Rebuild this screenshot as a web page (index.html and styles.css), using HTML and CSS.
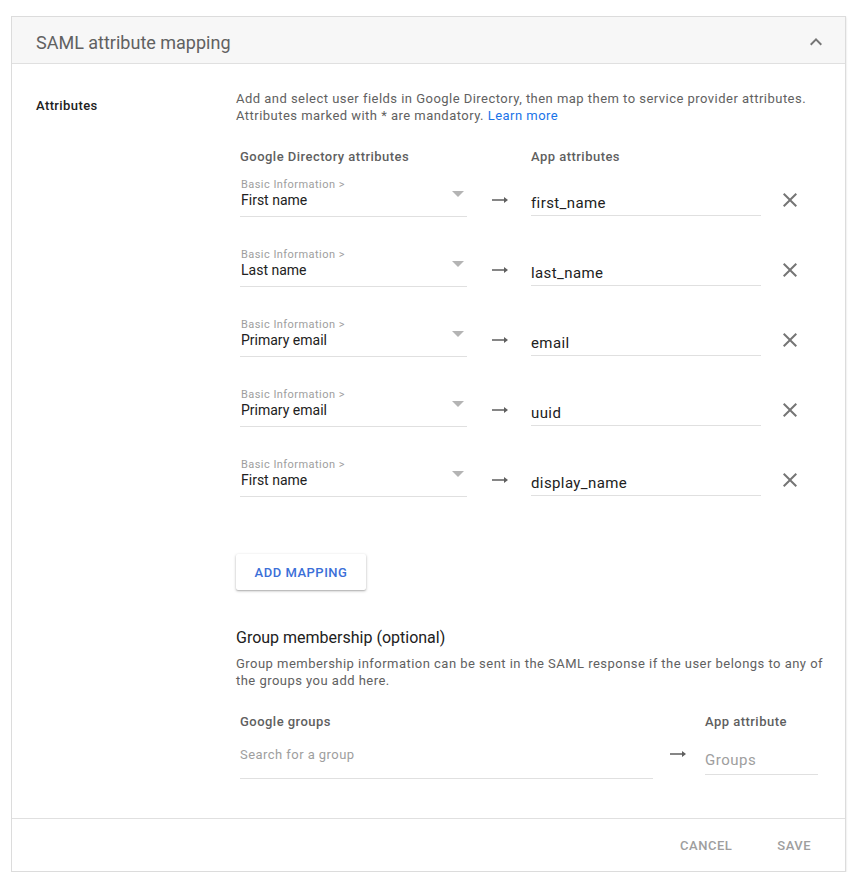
FILE: index.html
```html
<!DOCTYPE html>
<html>

<head>
    <title>SAML attribute mapping</title>
    <link rel="stylesheet" href="styles.css">
</head>

<body>
    <div class="card">
        <div class="card-header">
            <span class="card-title">SAML attribute mapping</span>
            <svg class="chevron" width="24" height="24" viewBox="0 0 24 24">
                <path d="M12 8l-6 6 1.41 1.41L12 10.83l4.59 4.58L18 14z" fill="#757575"></path>
            </svg>
        </div>

        <div class="card-body">
            <div class="section-label">Attributes</div>

            <div class="section-content">
                <p class="desc">Add and select user fields in Google Directory, then map them to service provider attributes. Attributes marked with * are mandatory. <a href="#" class="link">Learn more</a></p>

                <div class="map-head">
                    <span class="col-dir">Google Directory attributes</span>
                    <span>App attributes</span>
                </div>

                <div class="map-row">
                    <div class="select">
                        <div class="select-text">
                            <div class="select-cat">Basic Information &gt;</div>
                            <div class="select-value">First name</div>
                        </div>
                        <span class="caret"></span>
                    </div>
                    <svg class="arrow" width="16" height="6" viewBox="0 0 16 6"><path d="M16 3l-4-3v2.2H0v1.6h12V6z"></path></svg>
                    <div class="app-input">first_name</div>
                    <svg class="remove" width="14" height="14" viewBox="5 5 14 14"><path d="M19 6.41L17.59 5 12 10.59 6.41 5 5 6.41 10.59 12 5 17.59 6.41 19 12 13.41 17.59 19 19 17.59 13.41 12z"></path></svg>
                </div>

                <div class="map-row">
                    <div class="select">
                        <div class="select-text">
                            <div class="select-cat">Basic Information &gt;</div>
                            <div class="select-value">Last name</div>
                        </div>
                        <span class="caret"></span>
                    </div>
                    <svg class="arrow" width="16" height="6" viewBox="0 0 16 6"><path d="M16 3l-4-3v2.2H0v1.6h12V6z"></path></svg>
                    <div class="app-input">last_name</div>
                    <svg class="remove" width="14" height="14" viewBox="5 5 14 14"><path d="M19 6.41L17.59 5 12 10.59 6.41 5 5 6.41 10.59 12 5 17.59 6.41 19 12 13.41 17.59 19 19 17.59 13.41 12z"></path></svg>
                </div>

                <div class="map-row">
                    <div class="select">
                        <div class="select-text">
                            <div class="select-cat">Basic Information &gt;</div>
                            <div class="select-value">Primary email</div>
                        </div>
                        <span class="caret"></span>
                    </div>
                    <svg class="arrow" width="16" height="6" viewBox="0 0 16 6"><path d="M16 3l-4-3v2.2H0v1.6h12V6z"></path></svg>
                    <div class="app-input">email</div>
                    <svg class="remove" width="14" height="14" viewBox="5 5 14 14"><path d="M19 6.41L17.59 5 12 10.59 6.41 5 5 6.41 10.59 12 5 17.59 6.41 19 12 13.41 17.59 19 19 17.59 13.41 12z"></path></svg>
                </div>

                <div class="map-row">
                    <div class="select">
                        <div class="select-text">
                            <div class="select-cat">Basic Information &gt;</div>
                            <div class="select-value">Primary email</div>
                        </div>
                        <span class="caret"></span>
                    </div>
                    <svg class="arrow" width="16" height="6" viewBox="0 0 16 6"><path d="M16 3l-4-3v2.2H0v1.6h12V6z"></path></svg>
                    <div class="app-input">uuid</div>
                    <svg class="remove" width="14" height="14" viewBox="5 5 14 14"><path d="M19 6.41L17.59 5 12 10.59 6.41 5 5 6.41 10.59 12 5 17.59 6.41 19 12 13.41 17.59 19 19 17.59 13.41 12z"></path></svg>
                </div>

                <div class="map-row">
                    <div class="select">
                        <div class="select-text">
                            <div class="select-cat">Basic Information &gt;</div>
                            <div class="select-value">First name</div>
                        </div>
                        <span class="caret"></span>
                    </div>
                    <svg class="arrow" width="16" height="6" viewBox="0 0 16 6"><path d="M16 3l-4-3v2.2H0v1.6h12V6z"></path></svg>
                    <div class="app-input">display_name</div>
                    <svg class="remove" width="14" height="14" viewBox="5 5 14 14"><path d="M19 6.41L17.59 5 12 10.59 6.41 5 5 6.41 10.59 12 5 17.59 6.41 19 12 13.41 17.59 19 19 17.59 13.41 12z"></path></svg>
                </div>

                <button class="add-btn">ADD MAPPING</button>

                <div class="group-title">Group membership (optional)</div>
                <p class="desc group-desc">Group membership information can be sent in the SAML response if the user belongs to any of the groups you add here.</p>

                <div class="group-head">
                    <span class="col-groups">Google groups</span>
                    <span>App attribute</span>
                </div>

                <div class="group-row">
                    <div class="search">Search for a group</div>
                    <svg class="arrow group-arrow" width="16" height="6" viewBox="0 0 16 6"><path d="M16 3l-4-3v2.2H0v1.6h12V6z"></path></svg>
                    <div class="groups-input">Groups</div>
                </div>
            </div>
        </div>

        <div class="card-footer">
            <button class="flat-btn">CANCEL</button>
            <button class="flat-btn">SAVE</button>
        </div>
    </div>
</body>

</html>
```

FILE: styles.css
```css
body {
    margin: 16px 0 0 11px;
    font-family: Roboto, "Liberation Sans", Arial, sans-serif;
    color: #212121;
    background: #fff;
}

.card {
    width: 835px;
    box-sizing: border-box;
    border: 1px solid #dcdcdc;
    box-shadow: 0 1px 2px rgba(0, 0, 0, 0.15);
    background: #fff;
}

.card-header {
    display: flex;
    align-items: center;
    justify-content: space-between;
    height: 47px;
    box-sizing: border-box;
    padding: 4px 17px 0 24px;
    background: #f7f7f7;
    border-bottom: 1px solid #e0e0e0;
}

.card-title {
    font-size: 18px;
    color: #616161;
}

.chevron {
    display: block;
}

.card-body {
    display: grid;
    grid-template-columns: 200px 1fr;
    padding: 26px 16px 39px 24px;
}

.section-label {
    margin-top: 7px;
    font-size: 13px;
    line-height: 17px;
    font-weight: 500;
    letter-spacing: 0.4px;
    color: #212121;
}

.desc {
    margin: 0;
    font-size: 13px;
    line-height: 17px;
    letter-spacing: 0.47px;
    color: #616161;
}

.link {
    color: #1a73e8;
    text-decoration: none;
}

.map-head,
.group-head {
    display: flex;
    margin-top: 24px;
    padding-left: 4px;
    font-size: 13px;
    line-height: 17px;
    font-weight: 500;
    letter-spacing: 0.47px;
    color: #5f5f5f;
}

.col-dir {
    width: 291px;
}

.col-groups {
    width: 465px;
}

.map-row {
    display: flex;
    align-items: flex-start;
    height: 70px;
    padding-left: 4px;
}

.map-head + .map-row {
    margin-top: 13px;
}

.select {
    display: flex;
    align-items: center;
    width: 227px;
    padding: 0 3px 8px 1px;
    box-sizing: border-box;
    border-bottom: 1px solid #e0e0e0;
}

.select-text {
    flex: 1;
}

.select-cat {
    font-size: 11px;
    line-height: 14px;
    letter-spacing: 0.45px;
    color: #9e9e9e;
}

.select-value {
    font-size: 14px;
    line-height: 16px;
    color: #212121;
}

.caret {
    width: 0;
    height: 0;
    margin-top: 2px;
    border-left: 6px solid transparent;
    border-right: 6px solid transparent;
    border-top: 6px solid #b4b4b4;
}

.arrow {
    display: block;
    margin: 19px 0 0 25px;
    fill: #5f5f5f;
}

.app-input {
    width: 230px;
    margin: 16px 0 0 23px;
    padding-bottom: 3px;
    font-size: 15px;
    line-height: 18px;
    letter-spacing: 0.4px;
    color: #212121;
    border-bottom: 1px solid #e0e0e0;
}

.remove {
    display: block;
    margin: 15px 0 0 22px;
    fill: #757575;
}

.add-btn {
    display: block;
    width: 130px;
    height: 36px;
    margin-top: 26px;
    padding: 0;
    border: none;
    border-radius: 2px;
    background: #fff;
    box-shadow: 0 1px 3px rgba(0, 0, 0, 0.28), 0 1px 1px rgba(0, 0, 0, 0.1);
    font-family: inherit;
    font-size: 13px;
    font-weight: 500;
    letter-spacing: 0.5px;
    color: #3b6fd8;
}

.group-title {
    margin-top: 38px;
    font-size: 16px;
    line-height: 20px;
    color: #212121;
}

.group-desc {
    margin-top: 7px;
}

.group-row {
    display: flex;
    align-items: flex-start;
    padding-left: 4px;
}

.search {
    width: 413px;
    margin-top: 16px;
    padding-bottom: 15px;
    font-size: 13px;
    line-height: 17px;
    letter-spacing: 0.45px;
    color: #9e9e9e;
    border-bottom: 1px solid #e0e0e0;
}

.group-arrow {
    margin: 21px 0 0 17px;
}

.groups-input {
    width: 113px;
    margin: 21px 0 0 19px;
    padding-bottom: 5px;
    font-size: 15px;
    line-height: 18px;
    letter-spacing: 0.5px;
    color: #9e9e9e;
    border-bottom: 1px solid #e0e0e0;
}

.card-footer {
    display: flex;
    align-items: center;
    justify-content: flex-end;
    height: 52px;
    padding-right: 18px;
    border-top: 1px solid #e0e0e0;
}

.flat-btn {
    margin-left: 13px;
    padding: 0 16px;
    height: 36px;
    border: none;
    background: none;
    font-family: inherit;
    font-size: 13px;
    font-weight: 500;
    letter-spacing: 0.5px;
    color: #9e9e9e;
}
```
